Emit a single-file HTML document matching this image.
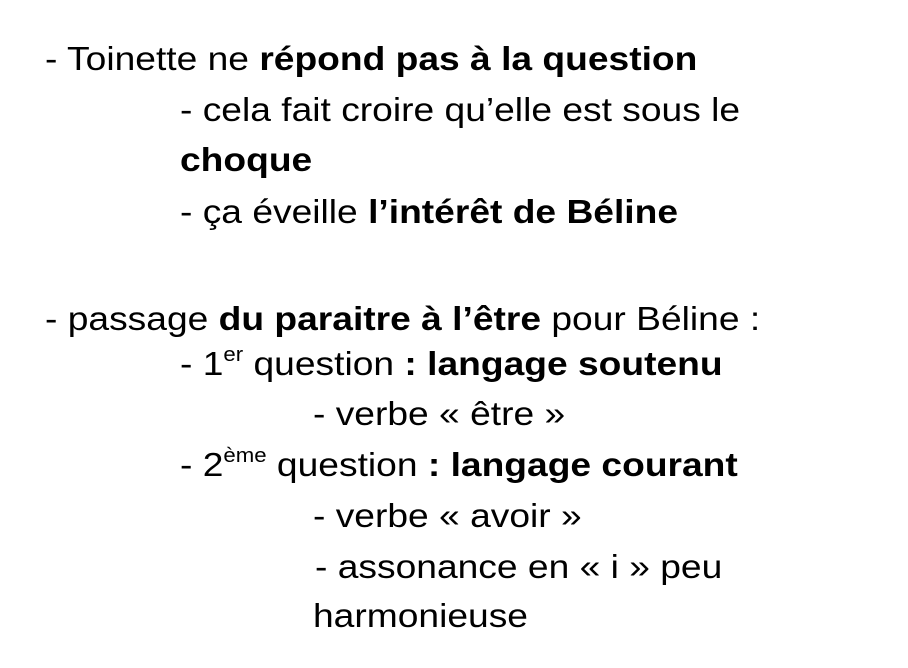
<!DOCTYPE html>
<html><head><meta charset="utf-8"><style>
body{margin:0;width:908px;height:668px;background:#fff;overflow:hidden;font-family:"Liberation Sans",Arial,sans-serif;color:#000}
.l{position:absolute;font-size:33.5px;line-height:40px;white-space:nowrap;transform:scaleX(1.11);transform-origin:left center}
b{font-weight:bold}
sup{font-size:20px;line-height:0;vertical-align:14px}
</style></head><body>
<div class="l" style="left:45px;top:40px">- Toinette ne <b>répond pas à la question</b></div>
<div class="l" style="left:180px;top:91px">- cela fait croire qu’elle est sous le</div>
<div class="l" style="left:180px;top:141px"><b>choque</b></div>
<div class="l" style="left:180px;top:193px">- ça éveille <b>l’intérêt de Béline</b></div>
<div class="l" style="left:45px;top:300px">- passage <b>du paraitre à l’être</b> pour Béline :</div>
<div class="l" style="left:180px;top:345px">- 1<sup>er</sup> question <b>: langage soutenu</b></div>
<div class="l" style="left:313px;top:395px">- verbe « être »</div>
<div class="l" style="left:180px;top:446px">- 2<sup>ème</sup> question <b>: langage courant</b></div>
<div class="l" style="left:313px;top:497px">- verbe « avoir »</div>
<div class="l" style="left:315px;top:548px">- assonance en « i » peu</div>
<div class="l" style="left:313px;top:597px">harmonieuse</div>
</body></html>
